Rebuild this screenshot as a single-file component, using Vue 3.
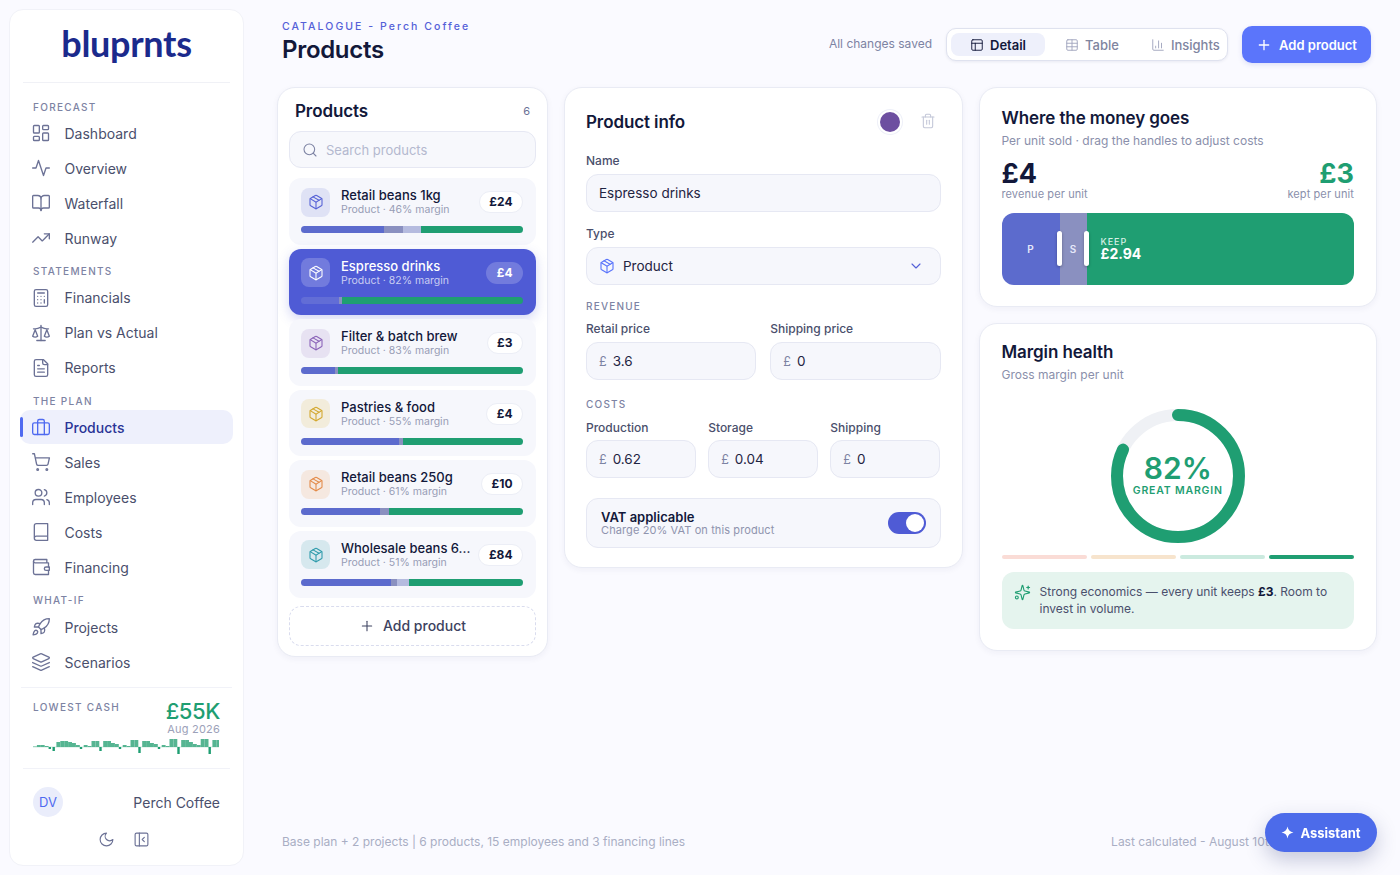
<script setup>
import { h } from 'vue'

const c = (x, y, r) => `M${x - r} ${y}a${r} ${r} 0 1 0 ${2 * r} 0a${r} ${r} 0 1 0 ${-2 * r} 0`
const r = (x, y, w, hh, q) => `M${x + q} ${y}h${w - 2 * q}a${q} ${q} 0 0 1 ${q} ${q}v${hh - 2 * q}a${q} ${q} 0 0 1 ${-q} ${q}h${-(w - 2 * q)}a${q} ${q} 0 0 1 ${-q} ${-q}v${-(hh - 2 * q)}a${q} ${q} 0 0 1 ${q} ${-q}z`

const icons = {
  dashboard: [r(3, 3, 7, 9, 1), r(14, 3, 7, 5, 1), r(14, 12, 7, 9, 1), r(3, 16, 7, 5, 1)],
  activity: ['M22 12h-4l-3 9L9 3l-3 9H2'],
  book: ['M12 7v14', 'M3 18a1 1 0 0 1-1-1V4a1 1 0 0 1 1-1h5a4 4 0 0 1 4 4 4 4 0 0 1 4-4h5a1 1 0 0 1 1 1v13a1 1 0 0 1-1 1h-6a3 3 0 0 0-3 3 3 3 0 0 0-3-3z'],
  trend: ['M22 7 13.5 15.5 8.5 10.5 2 17', 'M16 7h6v6'],
  calc: [r(4, 2, 16, 20, 2), 'M8 6h8', 'M16 14v4', 'M16 10h.01', 'M12 10h.01', 'M8 10h.01', 'M12 14h.01', 'M8 14h.01', 'M12 18h.01', 'M8 18h.01'],
  scale: ['m16 16 3-8 3 8c-.87.65-1.92 1-3 1s-2.13-.35-3-1Z', 'm2 16 3-8 3 8c-.87.65-1.92 1-3 1s-2.13-.35-3-1Z', 'M7 21h10', 'M12 3v18', 'M3 7h2c2 0 5-1 7-2 2 1 5 2 7 2h2'],
  file: ['M15 2H6a2 2 0 0 0-2 2v16a2 2 0 0 0 2 2h12a2 2 0 0 0 2-2V7Z', 'M14 2v4a2 2 0 0 0 2 2h4', 'M10 9H8', 'M16 13H8', 'M16 17H8'],
  briefcase: [r(2, 7, 20, 14, 2), 'M16 21V5a2 2 0 0 0-2-2h-4a2 2 0 0 0-2 2v16'],
  cart: [c(8, 21, 1), c(19, 21, 1), 'M2.05 2.05h2l2.66 12.42a2 2 0 0 0 2 1.58h9.78a2 2 0 0 0 1.95-1.57l1.65-7.43H5.12'],
  users: ['M16 21v-2a4 4 0 0 0-4-4H6a4 4 0 0 0-4 4v2', c(9, 7, 4), 'M22 21v-2a4 4 0 0 0-3-3.87', 'M16 3.13a4 4 0 0 1 0 7.75'],
  ledger: ['M4 19.5v-15A2.5 2.5 0 0 1 6.5 2H20v20H6.5a2.5 2.5 0 0 1 0-5H20'],
  wallet: ['M21 12V7H5a2 2 0 0 1 0-4h14v4', 'M3 5v14a2 2 0 0 0 2 2h16v-5', 'M18 12a2 2 0 0 0 0 4h4v-4Z'],
  rocket: ['M4.5 16.5c-1.5 1.26-2 5-2 5s3.74-.5 5-2c.71-.84.7-2.13-.09-2.91a2.18 2.18 0 0 0-2.91-.09z', 'm12 15-3-3a22 22 0 0 1 2-3.95A12.88 12.88 0 0 1 22 2c0 2.72-.78 7.5-6 11a22.35 22.35 0 0 1-4 2z', 'M9 12H4s.55-3.03 2-4c1.62-1.08 5 0 5 0', 'M12 15v5s3.03-.55 4-2c1.08-1.62 0-5 0-5'],
  layers: ['m12.83 2.18a2 2 0 0 0-1.66 0L2.6 6.08a1 1 0 0 0 0 1.83l8.58 3.91a2 2 0 0 0 1.66 0l8.58-3.9a1 1 0 0 0 0-1.83Z', 'm22 17.65-9.17 4.16a2 2 0 0 1-1.66 0L2 17.65', 'm22 12.65-9.17 4.16a2 2 0 0 1-1.66 0L2 12.65'],
  moon: ['M12 3a6 6 0 0 0 9 9 9 9 0 1 1-9-9Z'],
  panel: [r(3, 3, 18, 18, 2), 'M9 3v18', 'm16 15-3-3 3-3'],
  search: [c(11, 11, 8), 'm21 21-4.3-4.3'],
  box: ['M11 21.73a2 2 0 0 0 2 0l7-4A2 2 0 0 0 21 16V8a2 2 0 0 0-1-1.73l-7-4a2 2 0 0 0-2 0l-7 4A2 2 0 0 0 3 8v8a2 2 0 0 0 1 1.73z', 'M12 22V12', 'm3.3 7 7.703 4.734a2 2 0 0 0 1.994 0L20.7 7', 'm7.5 4.27 9 5.15'],
  trash: ['M3 6h18', 'M19 6v14c0 1-1 2-2 2H7c-1 0-2-1-2-2V6', 'M8 6V4c0-1 1-2 2-2h4c1 0 2 1 2 2v2', 'M10 11v6', 'M14 11v6'],
  chevron: ['m6 9 6 6 6-6'],
  plus: ['M5 12h14', 'M12 5v14'],
  layout: [r(3, 3, 18, 18, 2), 'M3 9h18', 'M9 21V9'],
  table: ['M12 3v18', r(3, 3, 18, 18, 2), 'M3 9h18', 'M3 15h18'],
  chart: ['M3 3v16a2 2 0 0 0 2 2h16', 'M18 17V9', 'M13 17V5', 'M8 17v-3'],
  sparkles: ['M9.937 15.5A2 2 0 0 0 8.5 14.063l-6.135-1.582a.5.5 0 0 1 0-.962L8.5 9.936A2 2 0 0 0 9.937 8.5l1.582-6.135a.5.5 0 0 1 .963 0L14.063 8.5A2 2 0 0 0 15.5 9.937l6.135 1.581a.5.5 0 0 1 0 .964L15.5 14.063a2 2 0 0 0-1.437 1.437l-1.582 6.135a.5.5 0 0 1-.963 0z', 'M20 3v4', 'M22 5h-4', c(4, 19, 2)]
}

const Icon = (props) =>
  h('svg', { width: props.s || 20, height: props.s || 20, viewBox: '0 0 24 24', fill: 'none', stroke: 'currentColor', 'stroke-width': props.w || 1.75, 'stroke-linecap': 'round', 'stroke-linejoin': 'round' },
    icons[props.n].map((d) => h('path', { d })))
Icon.props = ['n', 's', 'w']

const nav = [
  { label: 'FORECAST', items: [['dashboard', 'Dashboard'], ['activity', 'Overview'], ['book', 'Waterfall'], ['trend', 'Runway']] },
  { label: 'STATEMENTS', items: [['calc', 'Financials'], ['scale', 'Plan vs Actual'], ['file', 'Reports']] },
  { label: 'THE PLAN', items: [['briefcase', 'Products'], ['cart', 'Sales'], ['users', 'Employees'], ['ledger', 'Costs'], ['wallet', 'Financing']] },
  { label: 'WHAT-IF', items: [['rocket', 'Projects'], ['layers', 'Scenarios']] }
]

const products = [
  { name: 'Retail beans 1kg', margin: 46, price: '£24', color: '#5561d6', tint: '#dfe2f5', segs: [83, 19, 18] },
  { name: 'Espresso drinks', margin: 82, price: '£4', color: '#ffffff', tint: 'rgba(255,255,255,.2)', segs: [38, 3, 0], active: true },
  { name: 'Filter & batch brew', margin: 83, price: '£3', color: '#8a62b8', tint: '#e7e2f2', segs: [34, 3, 0] },
  { name: 'Pastries & food', margin: 55, price: '£4', color: '#d3a72e', tint: '#f2ecdb', segs: [98, 4, 0] },
  { name: 'Retail beans 250g', margin: 61, price: '£10', color: '#e38a48', tint: '#f5e8e0', segs: [79, 9, 0] },
  { name: 'Wholesale beans 6...', margin: 51, price: '£84', color: '#2d9bab', tint: '#d6e8ee', segs: [90, 6, 12] }
]

const tabs = [['layout', 'Detail', true], ['table', 'Table', false], ['chart', 'Insights', false]]

const sparkVals = [0.5, 2, 2, 1, -2, -4, 5, 6, 6, 5, 4, 2, -2, 2, 1, 6, 6, -4, 6, 6, 4, 3, -2, 2, 1, 7, 7, -6, 6, 6, 4, 3, -2, 2, 1, 8, 8, -7, 7, 7, 5, 3, 2, 8, 8, -7, 7, 7]
const sparkBars = sparkVals.map((v, i) => ({
  x: i * 3.9,
  y: v > 0 ? 10 - v : 10,
  h: Math.abs(v),
  w: v > 0 ? 3.9 : 2.4,
  fill: v > 0 ? '#56b592' : '#1f9e72'
}))
</script>

<template>
  <div class="app">
    <aside class="sidebar">
      <div class="logo"><span>bluprnts</span></div>
      <nav class="nav">
        <template v-for="g in nav" :key="g.label">
          <div class="nav-label">{{ g.label }}</div>
          <div v-for="it in g.items" :key="it[1]" class="nav-item" :class="{ active: it[1] === 'Products' }">
            <Icon :n="it[0]" class="nav-icon" :w="1.6" />
            <span>{{ it[1] }}</span>
          </div>
        </template>
      </nav>
      <div class="cash">
        <div class="cash-top">
          <div class="cash-label">LOWEST CASH</div>
          <div class="cash-val">
            <div class="cash-num">£55K</div>
            <div class="cash-date">Aug 2026</div>
          </div>
        </div>
        <svg class="spark" width="186" height="20" viewBox="0 0 186 20">
          <rect x="0" y="9.5" width="186" height="1" fill="#cfe9df" />
          <rect v-for="(b, i) in sparkBars" :key="i" :x="b.x" :y="b.y" :width="b.w" :height="b.h" :fill="b.fill" />
        </svg>
      </div>
      <div class="user">
        <div class="avatar">DV</div>
        <div class="company">Perch Coffee</div>
      </div>
      <div class="side-tools">
        <Icon n="moon" :s="17" :w="1.6" />
        <Icon n="panel" :s="17" :w="1.6" />
      </div>
    </aside>

    <main class="main">
      <header class="topbar">
        <div class="titles">
          <div class="eyebrow">CATALOGUE - Perch Coffee</div>
          <h1>Products</h1>
        </div>
        <div class="top-right">
          <span class="saved">All changes saved</span>
          <div class="tabs">
            <div v-for="t in tabs" :key="t[1]" class="tab" :class="{ on: t[2] }">
              <Icon :n="t[0]" :s="14" :w="1.6" />
              <span>{{ t[1] }}</span>
            </div>
          </div>
          <button class="add-btn"><Icon n="plus" :s="16" :w="2" /><span>Add product</span></button>
        </div>
      </header>

      <div class="grid">
        <section class="card list-card">
          <div class="list-head"><h2>Products</h2><span>6</span></div>
          <div class="search"><Icon n="search" :s="16" :w="1.6" /><span>Search products</span></div>
          <div class="plist">
            <div v-for="p in products" :key="p.name" class="pitem" :class="{ active: p.active }">
              <div class="prow">
                <div class="pico" :style="{ background: p.tint, color: p.color }"><Icon n="box" :s="16" :w="1.6" /></div>
                <div class="ptext">
                  <div class="pname">{{ p.name }}</div>
                  <div class="psub">Product · {{ p.margin }}% margin</div>
                </div>
                <div class="pprice">{{ p.price }}</div>
              </div>
              <div class="pbar">
                <i class="s1" :style="{ width: p.segs[0] + 'px' }"></i>
                <i class="s2" :style="{ width: p.segs[1] + 'px' }"></i>
                <i class="s3" :style="{ width: p.segs[2] + 'px' }"></i>
                <i class="s4"></i>
              </div>
            </div>
          </div>
          <div class="add-row"><Icon n="plus" :s="16" :w="1.6" /><span>Add product</span></div>
        </section>

        <section class="card info-card">
          <div class="info-head">
            <h2>Product info</h2>
            <span class="dot"></span>
            <Icon n="trash" :s="16" :w="1.6" class="trash" />
          </div>
          <label class="flabel">Name</label>
          <div class="field">Espresso drinks</div>
          <label class="flabel type-label">Type</label>
          <div class="field select">
            <Icon n="box" :s="16" :w="1.7" class="sel-ic" />
            <span>Product</span>
            <Icon n="chevron" :s="16" :w="1.7" class="sel-ch" />
          </div>
          <div class="section">REVENUE</div>
          <div class="cols two">
            <div><label class="flabel">Retail price</label><div class="field money"><em>£</em>3.6</div></div>
            <div><label class="flabel">Shipping price</label><div class="field money"><em>£</em>0</div></div>
          </div>
          <div class="section costs">COSTS</div>
          <div class="cols three">
            <div><label class="flabel">Production</label><div class="field money"><em>£</em>0.62</div></div>
            <div><label class="flabel">Storage</label><div class="field money"><em>£</em>0.04</div></div>
            <div><label class="flabel">Shipping</label><div class="field money"><em>£</em>0</div></div>
          </div>
          <div class="vat">
            <div>
              <div class="vat-t">VAT applicable</div>
              <div class="vat-s">Charge 20% VAT on this product</div>
            </div>
            <div class="toggle"><i></i></div>
          </div>
        </section>

        <div class="right">
          <section class="card money-card">
            <h2>Where the money goes</h2>
            <p class="sub">Per unit sold · drag the handles to adjust costs</p>
            <div class="totals">
              <div><div class="big">£4</div><div class="small">revenue per unit</div></div>
              <div class="tr"><div class="big green">£3</div><div class="small">kept per unit</div></div>
            </div>
            <div class="stack">
              <div class="st p">P<i class="handle"></i></div>
              <div class="st s">S<i class="handle"></i></div>
              <div class="st k">
                <div class="k-l">KEEP</div>
                <div class="k-v">£2.94</div>
              </div>
            </div>
          </section>

          <section class="card margin-card">
            <h2>Margin health</h2>
            <p class="sub">Gross margin per unit</p>
            <div class="gauge">
              <svg width="136" height="136" viewBox="0 0 136 136">
                <circle cx="68" cy="68" r="61" fill="none" stroke="#eff1f5" stroke-width="12" />
                <circle cx="68" cy="68" r="61" fill="none" stroke="#1f9e72" stroke-width="12" stroke-linecap="round" stroke-dasharray="314.3 383.3" transform="rotate(-90 68 68)" />
              </svg>
              <div class="gauge-text">
                <div class="g-num">82%</div>
                <div class="g-lab">GREAT MARGIN</div>
              </div>
            </div>
            <div class="scale">
              <i style="background:#fadcd6"></i><i style="background:#f7e4cd"></i><i style="background:#cbeadf"></i><i style="background:#1f9e72"></i>
            </div>
            <div class="insight">
              <Icon n="sparkles" :s="17" :w="1.6" class="ins-ic" />
              <p>Strong economics — every unit keeps <b>£3</b>. Room to invest in volume.</p>
            </div>
          </section>
        </div>
      </div>

      <footer class="foot">
        <span>Base plan + 2 projects <u>| 6 products, 15 employees and 3 financing lines</u></span>
        <span class="calc">Last calculated - August 10th</span>
      </footer>
    </main>

    <button class="assistant">
      <svg width="13" height="13" viewBox="0 0 24 24" fill="#fff"><path d="M12 1c1 6.500 4.500 10 11 11-6.500 1-10 4.500-11 11-1-6.500-4.500-10-11-11 6.500-1 10-4.500 11-11z" /></svg>
      <span>Assistant</span>
    </button>
  </div>
</template>

<style>
html, body { margin: 0; background: #fafaff; }
</style>

<style scoped>
* { box-sizing: border-box; }
.app {
  display: flex; width: 1400px; height: 875px; padding: 9px 23px 9px 9px; gap: 33px;
  background: #fafaff; font-family: Inter, "Liberation Sans", sans-serif; color: #12183a; overflow: hidden;
}
h1, h2, p { margin: 0; }

/* sidebar */
.sidebar {
  width: 235px; flex: none; display: flex; flex-direction: column; background: #fff;
  border: 1px solid #f1f2f8; border-radius: 14px; padding: 0 10px;
}
.logo {
  height: 73px; margin: 0 3px; border-bottom: 1px solid #f0f1f6; display: flex; align-items: center; justify-content: center;
}
.logo span {
  font-family: Lato, sans-serif; font-weight: 700; font-size: 36px; line-height: 1; color: #1b2a8c; margin-top: -6px; letter-spacing: -.3px;
}
.nav { padding-top: 8.5px; }
.nav-label {
  height: 24.67px; padding: 8px 0 0 13px; font-size: 10px; line-height: 14px; font-weight: 500; letter-spacing: 1.3px; color: #7d83a3;
}
.nav-item {
  position: relative; height: 34px; margin-bottom: 1px; display: flex; align-items: center; gap: 13.5px;
  padding-left: 11px; font-size: 14px; color: #4a4f6c; border-radius: 10px;
}
.nav-icon { color: #6c7296; flex: none; }
.nav-item.active { background: #eef0fc; color: #2a3496; font-weight: 500; }
.nav-item.active .nav-icon { color: #4f6af0; }
.nav-item.active::before {
  content: ""; position: absolute; left: 0; top: 7px; width: 2.5px; height: 20px; border-radius: 2px; background: #4f6af0;
}
.cash { margin: 7px 1px 0; border-top: 1px solid #f1f2f8; padding: 12px 12px 0; height: 81px; position: relative; }
.cash-top { display: flex; justify-content: space-between; }
.cash-label { font-size: 10px; line-height: 14px; letter-spacing: 1.3px; font-weight: 500; color: #7d83a3; }
.cash-val { text-align: right; }
.cash-num { font-size: 22px; line-height: 22px; font-weight: 500; color: #1f9e72; letter-spacing: -.4px; }
.cash-date { font-size: 11px; line-height: 14px; color: #9ca1b9; letter-spacing: .2px; }
.spark { display: block; margin-top: 1px; }
.user {
  margin: 0 3px; border-top: 1px solid #f1f2f8; padding: 18px 10px 0; display: flex; align-items: center; justify-content: space-between;
}
.avatar {
  width: 30px; height: 30px; border-radius: 50%; background: #eaedfb; color: #4f6af0; font-size: 13px; display: flex; align-items: center; justify-content: center;
}
.company { font-size: 14px; color: #4a4f6c; }
.side-tools { display: flex; justify-content: center; gap: 18px; margin-top: 14px; padding-right: 6px; color: #6c7296; }

/* main */
.main { flex: 1; min-width: 0; display: flex; flex-direction: column; }
.topbar { height: 78px; display: flex; justify-content: space-between; padding: 0 6px 0 5px; }
.eyebrow { margin-top: 11px; font-size: 10.5px; line-height: 14px; letter-spacing: 2.05px; color: #5460d8; font-weight: 500; }
h1 { font-size: 24px; line-height: 30px; font-weight: 600; letter-spacing: -.3px; margin-top: 1px; }
.top-right { display: flex; align-items: flex-start; }
.saved { font-size: 12px; line-height: 16px; color: #7d83a3; margin: 27px 14px 0 0; }
.tabs {
  margin-top: 19px; width: 282px; height: 33px; display: flex; padding: 4px; background: #fff; border: 1px solid #dfe2ef; border-radius: 10px;
  box-shadow: 0 1px 3px rgba(30,40,90,.08);
}
.tab { height: 23px; display: flex; align-items: center; gap: 6px; padding: 0 19px; font-size: 13px; font-weight: 500; color: #80859f; border-radius: 8px; }
.tab.on { background: #eef0fb; color: #12183a; font-weight: 600; }
.tab svg { color: #a0a5bd; }
.tab.on svg { color: #12183a; }
.tab:nth-child(2) { padding: 0 20px 0 20px; }
.tab:nth-child(3) { padding: 0 0 0 12px; }
.add-btn {
  margin: 17px 0 0 14px; width: 129px; height: 37px; border: 0; border-radius: 10px; background: #5b75fb; color: #fff; display: flex; align-items: center; justify-content: center; gap: 7px;
  font: 600 13px Inter, sans-serif; box-shadow: 0 2px 5px rgba(60,80,200,.15);
}
.grid { display: grid; grid-template-columns: 271px 1fr 1fr; gap: 16px; align-items: start; }
.card { background: #fff; border: 1px solid #e9ebf4; border-radius: 18px; box-shadow: 0 2px 6px rgba(30,40,90,.05); }
h2 { font-size: 17px; font-weight: 600; line-height: 22px; letter-spacing: -.1px; }

/* list */
.list-card { height: 570px; padding: 12px 11px; }
.list-head { display: flex; justify-content: space-between; align-items: center; padding: 0 6px; height: 22px; }
.list-head span { font-size: 11px; color: #6c7296; }
.search {
  margin-top: 9px; height: 37px; border: 1px solid #e6e8f3; border-radius: 12px; background: #f7f8fc; display: flex; align-items: center; gap: 8px; padding: 0 12px; font-size: 13px; color: #b4b9cf;
}
.search svg { color: #7d83a3; }
.plist { margin-top: 10px; display: flex; flex-direction: column; gap: 4px; }
.pitem { height: 66.6px; border-radius: 12px; background: #f6f7fc; padding: 9px 13px 0 12px; }
.pitem.active { background: #4f5bd5; color: #fff; box-shadow: 0 4px 12px rgba(79,91,213,.25); }
.prow { display: flex; align-items: center; height: 30px; }
.pico { width: 29px; height: 29px; border-radius: 8px; display: flex; align-items: center; justify-content: center; flex: none; }
.ptext { flex: 1; margin-left: 11px; min-width: 0; }
.pname { font-size: 13px; line-height: 15px; font-weight: 500; white-space: nowrap; }
.psub { font-size: 10.5px; line-height: 13px; color: #989db6; }
.active .psub { color: #c9cdf2; }
.pprice { height: 22px; padding: 0 9.5px; border-radius: 11px; background: #fff; border: 1px solid #eceef6; font-size: 12px; font-weight: 700; line-height: 20px; }
.active .pprice { background: rgba(255,255,255,.2); border-color: transparent; color: #fff; }
.pbar { margin-top: 9px; height: 7px; border-radius: 4px; overflow: hidden; display: flex; }
.pbar i { display: block; height: 100%; flex: none; }
.s1 { background: #5c6bcd; }
.s2 { background: #8a90c0; }
.s3 { background: #b5bbdf; }
.pbar .s4 { flex: 1; background: #1f9e72; }
.active .s1 { background: #626dd6; }
.add-row {
  margin-top: 8px; height: 40px; border: 1px dashed #d9dcee; border-radius: 12px; display: flex; align-items: center; justify-content: center; gap: 8px; font-size: 14px; font-weight: 500; color: #3d4260;
}

/* info */
.info-card { height: 481px; padding: 0 21px; }
.info-head { height: 67px; display: flex; align-items: center; }
.info-head h2 { flex: 1; }
.dot { width: 20px; height: 20px; border-radius: 50%; background: #6d4fa0; box-shadow: 0 0 0 2px #fff, 0 0 0 3px #eef0f8; }
.trash { margin: -2px 5px 0 20px; color: #c3c7d8; }
.flabel { display: block; font-size: 12px; line-height: 16px; font-weight: 500; color: #4a4f6c; margin-bottom: 5px; }
.type-label { margin-top: 14px; }
.info-head + .flabel { margin-top: -2px; }
.field { height: 38px; display: flex; align-items: center; padding: 0 12px; background: #f6f7fc; border: 1px solid #e6e8f3; border-radius: 12px; font-size: 13.5px; color: #1f2442; }
.select { gap: 8px; }
.sel-ic { color: #5b75fb; }
.sel-ch { margin-left: auto; margin-right: 4px; color: #5460d8; }
.section { margin-top: 14px; font-size: 10px; line-height: 14px; letter-spacing: 1.2px; font-weight: 500; color: #7d83a3; }
.cols { display: grid; margin-top: 8px; }
.two { grid-template-columns: 1fr 1fr; gap: 14px; }
.three { grid-template-columns: 1fr 1fr 1fr; gap: 12px; }
.costs { margin-top: 17px; }
.three { margin-top: 9px; }
.three .flabel { margin-bottom: 4px; }
.money em { font-style: normal; color: #7d83a3; font-size: 12.5px; margin-right: 6px; }
.vat {
  margin-top: 20px; height: 50px; display: flex; align-items: center; justify-content: space-between; padding: 0 14px; background: #f6f7fc; border: 1px solid #e6e8f3; border-radius: 12px;
}
.vat-t { font-size: 13px; line-height: 14px; font-weight: 600; }
.vat-s { font-size: 11px; line-height: 13px; color: #8f94ae; letter-spacing: .1px; }
.toggle { width: 38px; height: 22px; border-radius: 11px; background: #4f5bd5; position: relative; }
.toggle i { position: absolute; right: 2px; top: 2px; width: 18px; height: 18px; border-radius: 50%; background: #fff; }

/* right */
.right { display: flex; flex-direction: column; gap: 16px; }
.money-card { height: 220px; padding: 19px 22px 0; }
.sub { font-size: 12px; line-height: 16px; color: #8a8fab; margin-top: 4px; }
.totals { display: flex; justify-content: space-between; margin-top: 11px; }
.big { font-size: 27px; line-height: 28px; font-weight: 700; }
.green { color: #1f9e72; }
.small { font-size: 11px; line-height: 12px; color: #8a8fab; letter-spacing: .1px; }
.tr { text-align: right; }
.stack { margin-top: 13px; height: 72px; border-radius: 12px; overflow: hidden; display: flex; }
.st { position: relative; display: flex; align-items: center; justify-content: center; color: #e6e8fa; font-size: 10px; font-weight: 600; flex: none; height: 100%; }
.p { width: 58px; background: #5c6bcd; }
.s { width: 27px; background: #8a90c0; }
.k { flex: 1; background: #1f9e72; flex-direction: column; align-items: flex-start; padding-left: 14px; color: #fff; }
.handle { position: absolute; right: -2px; top: 18px; width: 5px; height: 35px; background: #fff; border-radius: 3px; box-shadow: 0 1px 3px rgba(0,0,0,.3); z-index: 1; }
.k-l { font-size: 9px; line-height: 10px; letter-spacing: 1px; font-weight: 500; color: #d6f0e6; }
.k-v { font-size: 14px; line-height: 14px; font-weight: 700; }
.margin-card { height: 328px; padding: 17px 22px 0; }
.gauge { position: relative; margin: 25px auto 0; width: 136px; height: 136px; }
.gauge svg { display: block; }
.gauge-text { position: absolute; inset: 0; display: flex; flex-direction: column; align-items: center; justify-content: center; color: #1f9e72; }
.g-num { font-size: 30px; line-height: 32px; font-weight: 600; margin-top: -4px; }
.g-lab { font-size: 10.5px; line-height: 13px; font-weight: 600; letter-spacing: .8px; }
.scale { display: grid; grid-template-columns: repeat(4, 1fr); gap: 4px; margin-top: 11px; }
.scale i { display: block; height: 4px; border-radius: 2px; }
.insight { margin-top: 13px; height: 57px; display: flex; gap: 9px; padding: 11px 12px; background: #e5f4ee; border-radius: 12px; }
.ins-ic { color: #1f9e72; flex: none; margin-top: 1px; }
.insight p { font-size: 12px; line-height: 17px; color: #4a4f6c; }
.insight b { color: #12183a; font-weight: 700; }

.foot { margin-top: auto; height: 32px; padding: 0 5px; display: flex; justify-content: space-between; font-size: 12px; line-height: 16px; color: #a9aec4; }
.foot u { text-decoration: none; }
.calc { margin-right: 96px; }
.assistant {
  position: fixed; left: 1265px; top: 813px; width: 112px; height: 39px; border: 0; border-radius: 20px; background: #4c6bea; color: #fff;
  display: flex; align-items: center; justify-content: center; gap: 6px; font: 700 13px Inter, sans-serif; box-shadow: 0 8px 20px rgba(40,50,110,.25);
}
</style>
